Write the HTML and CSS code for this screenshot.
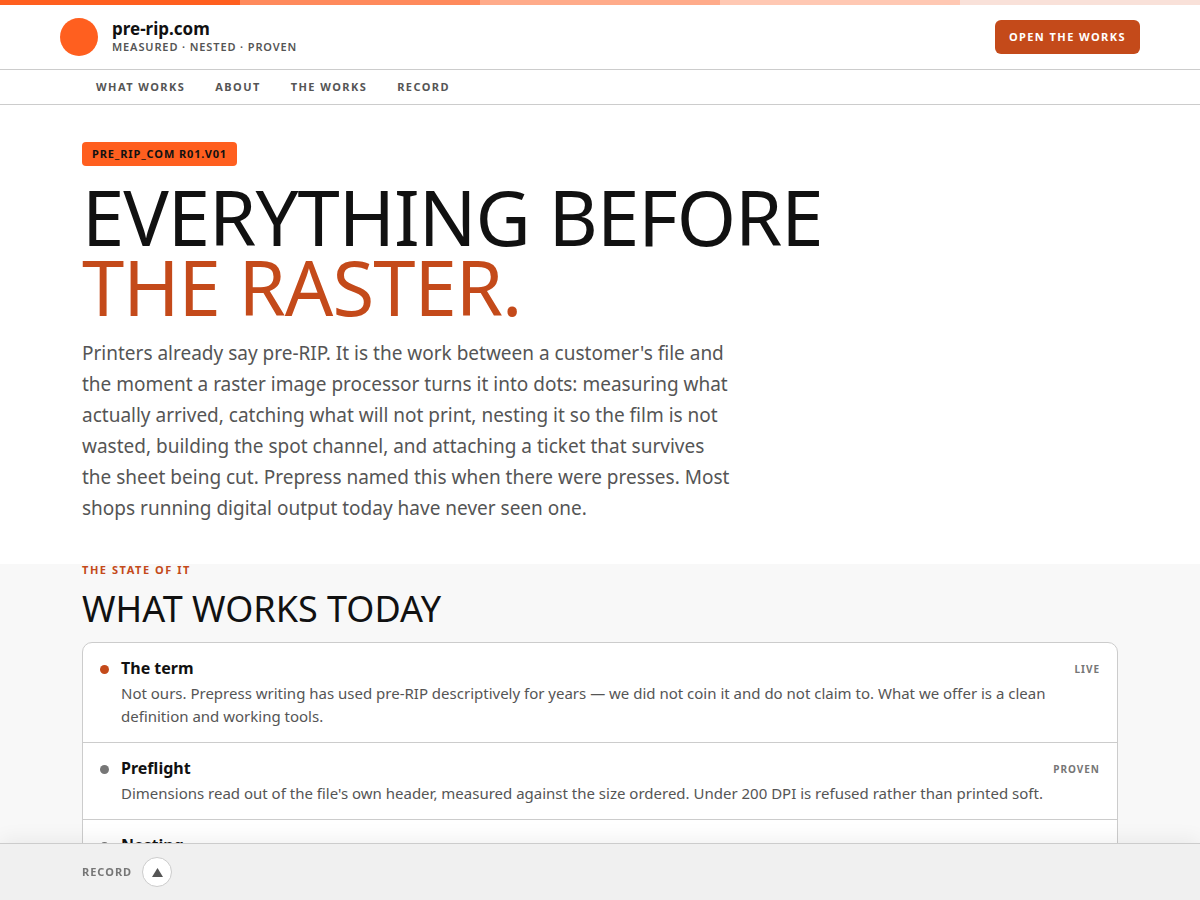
FILE: index.html
```html
<!DOCTYPE html>
<html lang="en">
<head>
  <meta charset="UTF-8">
  <title>pre-rip.com</title>
  <meta name="viewport" content="width=device-width, initial-scale=1.0">
  <link rel="stylesheet" href="styles.css">
</head>
<body>
  <div class="strip"><span></span><span></span><span></span><span></span><span></span></div>

  <header class="header">
    <a class="brand" href="#top">
      <span class="mark"></span>
      <span class="brand-text">
        <span class="brand-name">pre-rip.com</span>
        <span class="brand-tag">Measured · Nested · Proven</span>
      </span>
    </a>
    <a class="cta" href="#works">Open the works</a>
  </header>

  <nav class="nav">
    <div class="nav-inner">
      <a href="#state">What works</a>
      <a href="#about">About</a>
      <a href="#works">The works</a>
      <a href="#record">Record</a>
    </div>
  </nav>

  <main>
    <section class="hero" id="top">
      <div class="wrap">
        <span class="badge">PRE_RIP_COM R01.V01</span>
        <h1>Everything before <em>the raster.</em></h1>
        <p class="lede">Printers already say pre-RIP. It is the work between a customer's file and the moment a raster image processor turns it into dots: measuring what actually arrived, catching what will not print, nesting it so the film is not wasted, building the spot channel, and attaching a ticket that survives the sheet being cut. Prepress named this when there were presses. Most shops running digital output today have never seen one.</p>
      </div>
    </section>

    <section class="state" id="state">
      <div class="wrap">
        <p class="eyebrow">The state of it</p>
        <h2>What works today</h2>
        <ul class="list">
          <li class="row">
            <span class="dot live"></span>
            <div class="row-body">
              <h3>The term</h3>
              <p>Not ours. Prepress writing has used pre-RIP descriptively for years — we did not coin it and do not claim to. What we offer is a clean definition and working tools.</p>
            </div>
            <span class="status">Live</span>
          </li>
          <li class="row">
            <span class="dot"></span>
            <div class="row-body">
              <h3>Preflight</h3>
              <p>Dimensions read out of the file's own header, measured against the size ordered. Under 200 DPI is refused rather than printed soft.</p>
            </div>
            <span class="status">Proven</span>
          </li>
          <li class="row">
            <span class="dot"></span>
            <div class="row-body">
              <h3>Nesting</h3>
            </div>
          </li>
        </ul>
      </div>
    </section>
  </main>

  <footer class="record" id="record">
    <div class="wrap record-inner">
      <span class="record-label">Record</span>
      <button class="record-toggle" type="button" aria-label="Open record">
        <svg width="11" height="9" viewBox="0 0 11 9"><path d="M5.5 0L11 9H0z"/></svg>
      </button>
    </div>
  </footer>
</body>
</html>
```

FILE: styles.css
```css
:root {
  --orange: #ff5f1f;
  --rust: #c44a1a;
  --ink: #111111;
  --mid: #555555;
  --dim: #767676;
  --line: #cccccc;
  --soft: #f8f8f8;
}

* {
  box-sizing: border-box;
  margin: 0;
  padding: 0;
}

body {
  background: #fff;
  color: var(--ink);
  font-family: "Noto Sans", sans-serif;
  font-size: 16px;
}

a {
  color: inherit;
  text-decoration: none;
}

.strip {
  display: flex;
  height: 5px;
}

.strip span {
  flex: 1;
  background: var(--orange);
}

.strip span:nth-child(2) { background: #ff8a5c; }
.strip span:nth-child(3) { background: #ffab8a; }
.strip span:nth-child(4) { background: #ffc8b3; }
.strip span:nth-child(5) { background: #f9e1d9; }

.header {
  display: flex;
  align-items: center;
  justify-content: space-between;
  padding: 13px 60px;
  border-bottom: 1px solid var(--line);
}

.brand {
  display: flex;
  align-items: center;
  gap: 14px;
}

.mark {
  width: 38px;
  height: 38px;
  border-radius: 50%;
  background: var(--orange);
}

.brand-text {
  display: flex;
  flex-direction: column;
}

.brand-name {
  font-size: 17px;
  font-weight: 700;
  line-height: 20px;
}

.brand-tag {
  color: var(--mid);
  font-size: 11px;
  font-weight: 600;
  letter-spacing: 0.08em;
  line-height: 16px;
  text-transform: uppercase;
}

.cta {
  background: var(--rust);
  border-radius: 6px;
  color: #fff;
  font-size: 11px;
  font-weight: 700;
  letter-spacing: 0.13em;
  line-height: 18px;
  padding: 8px 14px;
  text-transform: uppercase;
}

.nav {
  border-bottom: 1px solid var(--line);
}

.wrap,
.nav-inner {
  max-width: 1080px;
  margin: 0 auto;
  padding: 0 22px;
}

.nav-inner {
  display: flex;
  gap: 30px;
  padding: 8px 36px;
  color: var(--mid);
  font-size: 11px;
  font-weight: 700;
  letter-spacing: 0.13em;
  line-height: 18px;
  text-transform: uppercase;
}

.hero {
  padding: 36px 0 40px;
}

.badge {
  display: inline-block;
  background: var(--orange);
  border-radius: 4px;
  font-size: 11px;
  font-weight: 700;
  letter-spacing: 0.08em;
  line-height: 16px;
  padding: 4px 10px;
}

h1 {
  font-size: 76px;
  font-weight: 400;
  letter-spacing: -1px;
  line-height: 70px;
  margin: 16px 0;
  text-transform: uppercase;
}

h1 em {
  display: block;
  color: var(--rust);
  font-style: normal;
}

.lede {
  max-width: 650px;
  color: var(--mid);
  font-size: 19px;
  line-height: 31px;
}

.state {
  background: var(--soft);
  padding-bottom: 90px;
}

.eyebrow {
  color: var(--rust);
  font-size: 11px;
  font-weight: 700;
  letter-spacing: 0.14em;
  line-height: 12px;
  text-transform: uppercase;
}

h2 {
  font-size: 36px;
  font-weight: 400;
  line-height: 36px;
  margin: 15px 0;
  text-transform: uppercase;
}

.list {
  background: #fff;
  border: 1px solid var(--line);
  border-radius: 10px;
  list-style: none;
}

.row {
  display: flex;
  gap: 8px;
  padding: 14px 17px;
}

.row + .row {
  border-top: 1px solid var(--line);
}

.dot {
  flex: none;
  width: 9px;
  height: 9px;
  margin: 8px 4px 0 0;
  border-radius: 50%;
  background: var(--dim);
}

.dot.live {
  background: var(--rust);
}

.row-body {
  flex: 1;
}

h3 {
  font-size: 16px;
  line-height: 22px;
  margin-bottom: 3px;
}

.row p {
  color: var(--mid);
  font-size: 15px;
  line-height: 23px;
}

.status {
  color: var(--dim);
  font-size: 10px;
  font-weight: 700;
  letter-spacing: 0.1em;
  line-height: 24px;
  text-transform: uppercase;
}

.record {
  position: fixed;
  right: 0;
  bottom: 0;
  left: 0;
  background: #f0f0f0;
  border-top: 1px solid var(--line);
  box-shadow: 0 -4px 20px rgba(0, 0, 0, 0.06);
}

.record-inner {
  display: flex;
  align-items: center;
  gap: 10px;
  padding-top: 13px;
  padding-bottom: 13px;
}

.record-label {
  color: var(--dim);
  font-size: 11px;
  font-weight: 700;
  letter-spacing: 0.09em;
  line-height: 16px;
  text-transform: uppercase;
}

.record-toggle {
  display: flex;
  align-items: center;
  justify-content: center;
  width: 30px;
  height: 30px;
  background: #fff;
  border: 1px solid var(--line);
  border-radius: 50%;
  cursor: pointer;
}

.record-toggle svg {
  fill: var(--mid);
}
```
